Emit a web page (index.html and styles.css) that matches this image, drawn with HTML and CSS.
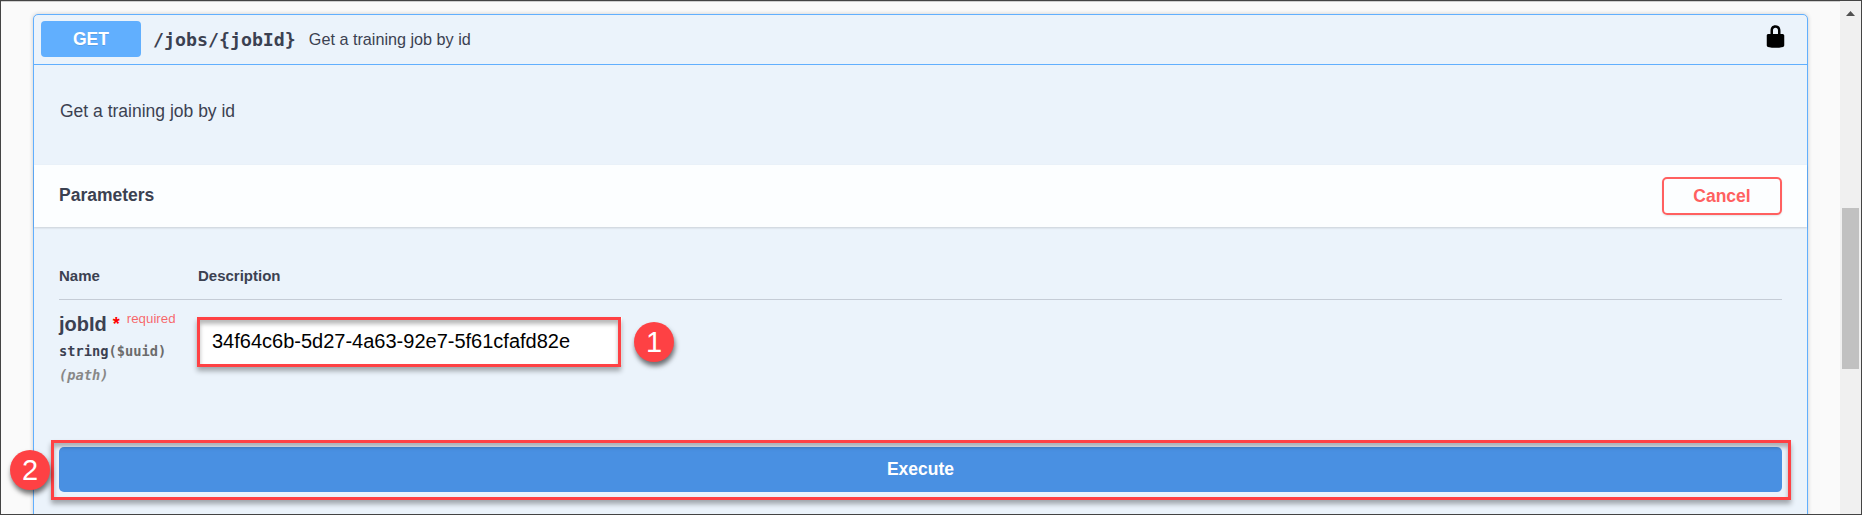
FILE: index.html
```html
<!DOCTYPE html>
<html lang="en">
<head>
<meta charset="utf-8">
<title>API docs</title>
<link rel="stylesheet" href="styles.css">
</head>
<body>
<div class="window">
  <main class="page">
    <section class="opblock">
      <header class="summary">
        <span class="method">GET</span>
        <span class="path">/jobs/{jobId}</span>
        <span class="summary-text">Get a training job by id</span>
        <svg class="lock" width="25" height="25" viewBox="0 0 20 20"><path d="M15.8 8H14V5.6C14 2.703 12.665 1 10 1 7.334 1 6 2.703 6 5.6V8H4c-.553 0-1 .646-1 1.199V17c0 .549.428 1.139.951 1.307l1.197.387C5.672 18.861 6.55 19 7.1 19h5.8c.549 0 1.428-.139 1.951-.307l1.196-.387c.524-.167.953-.757.953-1.306V9.199C17 8.646 16.352 8 15.8 8zM12 8H8V5.199C8 3.754 8.797 3 10 3c1.203 0 2 .754 2 2.199V8z"/></svg>
      </header>
      <p class="description">Get a training job by id</p>
      <div class="section-header">
        <h4 class="section-title">Parameters</h4>
        <button class="cancel">Cancel</button>
      </div>
      <div class="parameters">
        <div class="row head"><span>Name</span><span>Description</span></div>
        <div class="row">
          <div class="param">
            <div class="param-name">jobId<span class="star">*</span><span class="required">required</span></div>
            <div class="param-type">string<span class="format">($uuid)</span></div>
            <div class="param-in">(path)</div>
          </div>
          <div class="field">
            <div class="value">34f64c6b-5d27-4a63-92e7-5f61cfafd82e</div>
            <span class="callout callout-field"></span>
            <span class="badge badge-one">1</span>
          </div>
        </div>
      </div>
      <div class="execute-wrap">
        <button class="execute">Execute</button>
        <span class="callout callout-execute"></span>
        <span class="badge badge-two">2</span>
      </div>
    </section>
  </main>
  <div class="scrollbar">
    <svg class="arrow" width="9" height="5" viewBox="0 0 9 5"><path d="M4.5 0L9 5H0z" fill="#505050"/></svg>
    <div class="thumb"></div>
  </div>
</div>
</body>
</html>
```
FILE: styles.css
```css
* { box-sizing: border-box; }
body {
  margin: 0;
  overflow: hidden;
  font-family: "Liberation Sans", Arial, sans-serif;
  color: #3b4151;
}
.window {
  display: flex;
  height: 515px;
  overflow: hidden;
  border: 1px solid #444;
  background: #fafafa;
  box-shadow: inset 0 1px 0 #cfcfcf;
}
.page { flex: 1; padding: 13px 32px 0 32px; }
.opblock {
  height: 560px;
  border: 1px solid #61affe;
  border-radius: 5px;
  background: #ebf3fb;
  box-shadow: 0 0 4px rgba(0, 0, 0, .19);
}
.summary {
  display: flex;
  align-items: center;
  height: 50px;
  padding: 0 19px 2px 7px;
  border-bottom: 1px solid #61affe;
}
.method {
  width: 100px;
  height: 36px;
  border-radius: 4px;
  background: #61affe;
  color: #fff;
  font-size: 17.5px;
  font-weight: 700;
  line-height: 36px;
  text-align: center;
  text-shadow: 0 1px 0 rgba(0, 0, 0, .1);
}
.path {
  margin: 1px 0 0 12px;
  font: 700 18.25px "DejaVu Sans Mono", monospace;
}
.summary-text { margin: 2px 0 0 13px; font-size: 16.2px; }
.lock { margin: -4px 0 0 auto; }
.description {
  height: 100px;
  margin: 0;
  padding: 36px 25px 0 26px;
  font-size: 17.5px;
  line-height: 20px;
}
.section-header {
  display: flex;
  align-items: center;
  justify-content: space-between;
  height: 62px;
  padding: 0 25px;
  background: rgba(255, 255, 255, .85);
  box-shadow: 0 1px 2px rgba(0, 0, 0, .15);
}
.section-title { margin: -1px 0 0; font-size: 17.5px; }
.cancel {
  width: 120px;
  height: 38px;
  padding: 0;
  border: 2px solid #ff6060;
  border-radius: 5px;
  background: transparent;
  box-shadow: 0 1px 2px rgba(0, 0, 0, .1);
  color: #ff6060;
  font: 700 17.5px "Liberation Sans", Arial, sans-serif;
}
.parameters { height: 220px; padding: 25px 25px 0; }
.row { display: grid; grid-template-columns: 139px 1fr; }
.head {
  height: 48px;
  padding-top: 15px;
  border-bottom: 1px solid #c5ccd6;
  font-size: 15px;
  font-weight: 700;
  line-height: 18px;
}
.param { padding-top: 11px; }
.param-name { height: 27px; font-size: 20px; font-weight: 700; line-height: 26px; white-space: nowrap; }
.star { position: relative; top: -1px; margin-left: 6px; color: #f00; font-size: 18px; }
.required {
  position: relative;
  top: -8px;
  margin-left: 7px;
  color: rgba(255, 0, 0, .6);
  font-size: 13.3px;
  font-weight: 400;
}
.param-type, .param-in {
  font: 700 13.7px/24px "DejaVu Sans Mono", monospace;
}
.param-type { padding-top: 1px; }
.format { color: #6b6b6b; }
.param-in { color: #888; font-style: italic; }
.field { position: relative; width: 424px; height: 50px; margin-top: 17px; }
.value {
  height: 48px;
  padding: 0 14px;
  background: #fff;
  color: #000;
  font-size: 20px;
  line-height: 48px;
}
.callout {
  position: absolute;
  border: 3px solid #fe4144;
  box-shadow: 0 4px 5px rgba(0, 0, 0, .32), inset 0 4px 4px rgba(0, 0, 0, .28);
}
.callout-field { inset: 0 1px 0 -1px; }
.callout-execute { inset: -7px -9px -8px -8px; }
.badge {
  position: absolute;
  width: 40px;
  height: 40px;
  border-radius: 50%;
  background: #fe4144;
  box-shadow: 1px 4px 5px rgba(0, 0, 0, .55);
  color: #fff;
  font-size: 29px;
  line-height: 41px;
  text-align: center;
}
.badge-one { left: 436px; top: 5px; }
.badge-two { left: -49px; top: 3px; }
.execute-wrap { position: relative; margin: 0 25px; }
.execute {
  display: block;
  width: 100%;
  height: 45px;
  padding: 0;
  border: 0;
  border-radius: 5px;
  background: #4990e2;
  color: #fff;
  font: 700 17.5px "Liberation Sans", Arial, sans-serif;
}
.scrollbar {
  display: flex;
  flex-direction: column;
  align-items: center;
  width: 21px;
  background: #f0f0f0;
}
.arrow { margin-top: 10px; }
.thumb { width: 17px; height: 161px; margin-top: 192px; background: #c1c1c1; }
```
